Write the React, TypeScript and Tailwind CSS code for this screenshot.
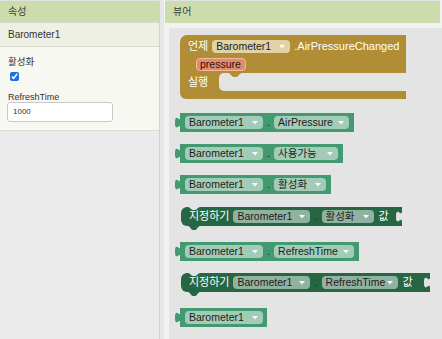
import React from "react";

const WS = "#e4e4e4";
const FONT = "font-['Liberation_Sans','Noto_Sans_CJK_KR',sans-serif]";

function Arrow() {
  return (
    <svg width="6" height="4" viewBox="0 0 6 4" className="ml-auto shrink-0">
      <path d="M0 0 H6 L3 3.5 Z" fill="#ffffff" fillOpacity="0.9" />
    </svg>
  );
}

type Tone = "g" | "d" | "e";

function Field({ label, w, tone }: { label: string; w: string; tone: Tone }) {
  const bg =
    tone === "g" ? "bg-[#a3ccb8]" : tone === "d" ? "bg-[#92b2a1]" : "bg-[#e2d2a8]";
  return (
    <div
      className={`${w} ${bg} flex h-[13px] shrink-0 items-center rounded-[4px] pl-[4px] pr-[5px]`}
    >
      <span className="whitespace-nowrap text-[10.5px] leading-none text-[#1c1c1c]">{label}</span>
      <Arrow />
    </div>
  );
}

function Tab({ color, cls }: { color: string; cls: string }) {
  return (
    <svg
      className={cls}
      width="6"
      height="11"
      viewBox="0 5 8 15"
      preserveAspectRatio="none"
    >
      <path d="M8 5 C8 15 0 -3 0 12.5 S8 10 8 20 Z" fill={color} />
    </svg>
  );
}

function Dot() {
  return <span className="text-[11px] leading-none text-[#222]">.</span>;
}

function Getter({ top, prop, pw }: { top: string; prop?: string; pw?: string }) {
  return (
    <div
      className={`absolute left-[11px] ${top} flex h-[19px] items-center gap-[4px] bg-[#439970] pl-[5px] ${prop ? "pr-[5px]" : "pr-[4px]"}`}
    >
      <Tab color="#439970" cls="absolute -left-[5px] top-[4px]" />
      <Field label="Barometer1" w="w-[78px]" tone="g" />
      {prop && pw ? (
        <>
          <Dot />
          <Field label={prop} w={pw} tone="g" />
        </>
      ) : null}
    </div>
  );
}

function Setter({ top, prop, pw, pr }: { top: string; prop: string; pw: string; pr: string }) {
  return (
    <div
      className={`absolute left-[12px] ${top} flex h-[19px] items-center gap-[4px] rounded-l-[6px] bg-[#266643] pl-[8px] ${pr}`}
    >
      <svg className="absolute left-[7px] top-0" width="12" height="3" viewBox="0 0 12 3">
        <path d="M0 0 C2 0 3 3 5 3 H7 C9 3 10 0 12 0 Z" fill={WS} />
      </svg>
      <svg className="absolute left-[7px] -bottom-[4px]" width="12" height="4" viewBox="0 0 12 4">
        <path d="M0 0 C2 0 3 4 5 4 H7 C9 4 10 0 12 0 Z" fill="#266643" />
      </svg>
      <span className="text-[11px] leading-none text-white">지정하기</span>
      <Field label="Barometer1" w="w-[77px]" tone="d" />
      <Dot />
      <Field label={prop} w={pw} tone="d" />
      <span className="ml-[1px] text-[11px] leading-none text-white">값</span>
      <Tab color={WS} cls="absolute right-0 top-[4px]" />
    </div>
  );
}

function EventBlock() {
  return (
    <div className="absolute left-[11px] top-[7px] flex w-[226px] flex-col">
      <div className="flex flex-col gap-[5px] rounded-tl-[7px] bg-[#b18e35] pb-[2px] pt-[5px]">
        <div className="flex h-[13px] items-center gap-[4px] pl-[8px]">
          <span className="text-[11px] leading-none text-white">언제</span>
          <Field label="Barometer1" w="w-[78px]" tone="e" />
          <span className="text-[11px] leading-none text-white">.AirPressureChanged</span>
        </div>
        <div className="flex h-[13px] items-center pl-[16px]">
          <div className="flex h-[13px] w-[50px] items-center rounded-[4px] border border-[#f2b9a3] bg-[#e48b6c] pl-[3px]">
            <span className="text-[10.5px] leading-none text-[#2a140c]">pressure</span>
          </div>
        </div>
      </div>
      <div className="flex h-[18px] bg-[#b18e35]">
        <div className="flex w-[39px] items-center pl-[8px]">
          <span className="text-[11px] leading-none text-white">실행</span>
        </div>
        <div className="relative flex-1 rounded-l-[5px] bg-[#e4e4e4]">
          <svg className="absolute left-[9px] top-0" width="14" height="4" viewBox="0 0 14 4">
            <path d="M0 0 C2.5 0 3.5 4 6 4 H8 C10.5 4 11.5 0 14 0 Z" fill="#b18e35" />
          </svg>
        </div>
      </div>
      <div className="h-[8px] rounded-bl-[6px] bg-[#b18e35]" />
    </div>
  );
}

export default function App() {
  return (
    <div className={`${FONT} flex h-[339px] w-[442px] overflow-hidden bg-[#ececec]`}>
      {/* left properties panel */}
      <div className="flex w-[159px] shrink-0 flex-col">
        <div className="h-[23px] border-b border-t border-[#d6d9cc] border-t-[#e2e2e2] bg-[#cddcac] pl-[8px] text-[10px] leading-[21px] text-[#3c3c3c]">
          속성
        </div>
        <div className="h-[24px] border-b border-[#d8d8d0] bg-[#eef0e4] pl-[8px] text-[10px] leading-[23px] text-[#333]">
          Barometer1
        </div>
        <div className="flex h-[84px] flex-col border-b border-[#dcdcd4] bg-[#f8f8f3] pl-[8px] pt-[10px]">
          <span className="text-[9.5px] leading-[10px] text-[#333]">활성화</span>
          <input
            type="checkbox"
            checked
            readOnly
            className="m-0 ml-[2px] mt-[5px] h-[9px] w-[9px] accent-[#1a6fe0]"
          />
          <span className="mt-[11px] text-[9px] leading-[10px] text-[#333]">RefreshTime</span>
          <div className="-ml-[1px] flex h-[20px] w-[106px] items-center rounded-[3px] border border-[#c9c9c9] bg-white pl-[5px] text-[8px] text-[#333]">
            1000
          </div>
        </div>
        <div className="flex-1 bg-[#ebebeb]" />
      </div>

      {/* divider */}
      <div className="w-[6px] shrink-0 border-l border-r border-[#d2d2d2] border-r-[#f4f4f4] bg-[#e6e6e6]" />

      {/* right viewer panel */}
      <div className="flex flex-1 flex-col bg-[#f2f2f2]">
        <div className="mr-[2px] h-[23px] border-t border-[#e2e2e2] bg-[#cddcac] pl-[8px] text-[10px] leading-[21px] text-[#3c3c3c]">
          뷰어
        </div>
        <div className="flex flex-1 flex-col pl-[4px] pt-[5px]">
          <div className="relative flex-1 bg-[#e4e4e4]">
            <EventBlock />
            <Getter top="top-[85px]" prop="AirPressure" pw="w-[75px]" />
            <Getter top="top-[116px]" prop="사용가능" pw="w-[64px]" />
            <Getter top="top-[147px]" prop="활성화" pw="w-[52px]" />
            <Setter top="top-[179px]" prop="활성화" pw="w-[52px]" pr="pr-[13px]" />
            <Getter top="top-[214px]" prop="RefreshTime" pw="w-[80px]" />
            <Setter top="top-[245px]" prop="RefreshTime" pw="w-[76px]" pr="pr-[17px]" />
            <Getter top="top-[280px]" />
          </div>
        </div>
      </div>
    </div>
  );
}
